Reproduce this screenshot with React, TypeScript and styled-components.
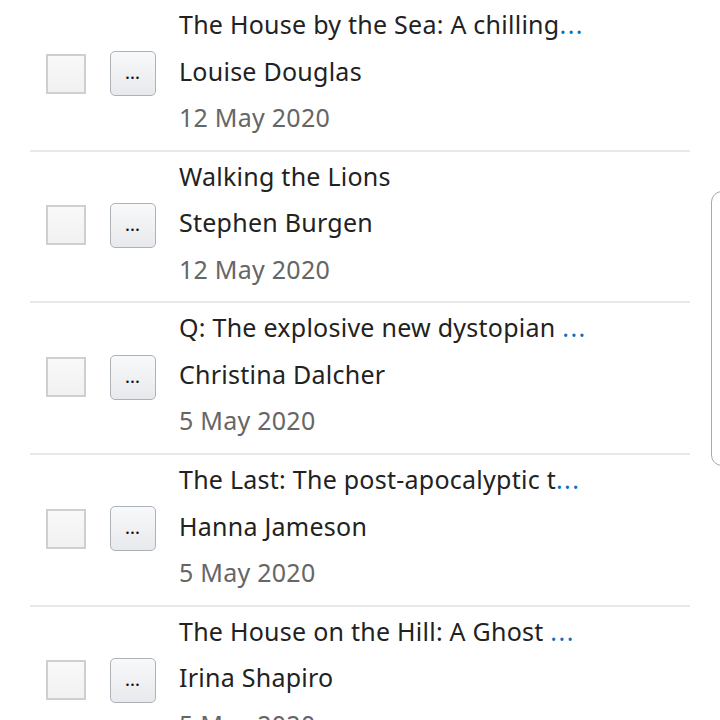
import React from 'react'
import styled, { createGlobalStyle } from 'styled-components'

const GlobalStyle = createGlobalStyle`
  html, body {
    margin: 0;
    padding: 0;
    background: #ffffff;
    overflow: hidden;
  }
  body {
    font-family: 'Noto Sans', 'Liberation Sans', sans-serif;
  }
`

const Page = styled.div`
  position: relative;
  width: 720px;
  height: 720px;
  overflow: hidden;
  background: #fff;
`

const List = styled.ul`
  list-style: none;
  margin: 0;
  padding: 0 30px;
  display: flex;
  flex-direction: column;
`

const Row = styled.li`
  display: flex;
  align-items: center;
  height: 151.67px;
  box-sizing: border-box;
  padding: 0 0 8px 16px;
  border-bottom: 2px solid #e8e8e8;
`

const Check = styled.span`
  margin-top: 6px;
  width: 40px;
  height: 40px;
  box-sizing: border-box;
  border: 2px solid #cfcfcf;
  background: linear-gradient(#f9f9f9, #f1f1f1);
  flex-shrink: 0;
`

const MoreButton = styled.button`
  margin: 6px 0 0 24px;
  width: 46px;
  height: 45px;
  box-sizing: border-box;
  border: 1.5px solid #adb1b8;
  border-radius: 5px;
  background: linear-gradient(#f8f9fa, #e7e9ec);
  color: #111;
  font-family: 'Noto Sans', sans-serif;
  font-size: 14px;
  font-weight: 700;
  letter-spacing: 1px;
  padding: 0;
  flex-shrink: 0;
`

const Info = styled.div`
  margin-left: 23px;
  display: flex;
  flex-direction: column;
  font-size: 25px;
  letter-spacing: 0.25px;
  line-height: 46.5px;
  color: #222;
  white-space: nowrap;
`

const Title = styled.span`
  color: #222;
`

const Dots = styled.span`
  color: #0a6ebd;
  letter-spacing: 1.5px;
`

const Author = styled.span`
  color: #222;
`

const Date = styled.span`
  color: #666;
`

const Popup = styled.div`
  position: absolute;
  left: 711px;
  top: 191px;
  width: 60px;
  height: 275px;
  box-sizing: border-box;
  border: 1.5px solid #a9a9a9;
  border-radius: 11px;
  background: #fff;
`

const books = [
  { title: 'The House by the Sea: A chilling', author: 'Louise Douglas', date: '12 May 2020', more: true },
  { title: 'Walking the Lions', author: 'Stephen Burgen', date: '12 May 2020', more: false },
  { title: 'Q: The explosive new dystopian ', author: 'Christina Dalcher', date: '5 May 2020', more: true },
  { title: 'The Last: The post-apocalyptic t', author: 'Hanna Jameson', date: '5 May 2020', more: true },
  { title: 'The House on the Hill: A Ghost ', author: 'Irina Shapiro', date: '5 May 2020', more: true },
]

export default function App() {
  return (
    <Page>
      <GlobalStyle />
      <List>
        {books.map((b) => (
          <Row key={b.title}>
            <Check />
            <MoreButton>...</MoreButton>
            <Info>
              <Title>
                {b.title}
                {b.more && <Dots>...</Dots>}
              </Title>
              <Author>{b.author}</Author>
              <Date>{b.date}</Date>
            </Info>
          </Row>
        ))}
      </List>
      <Popup />
    </Page>
  )
}
